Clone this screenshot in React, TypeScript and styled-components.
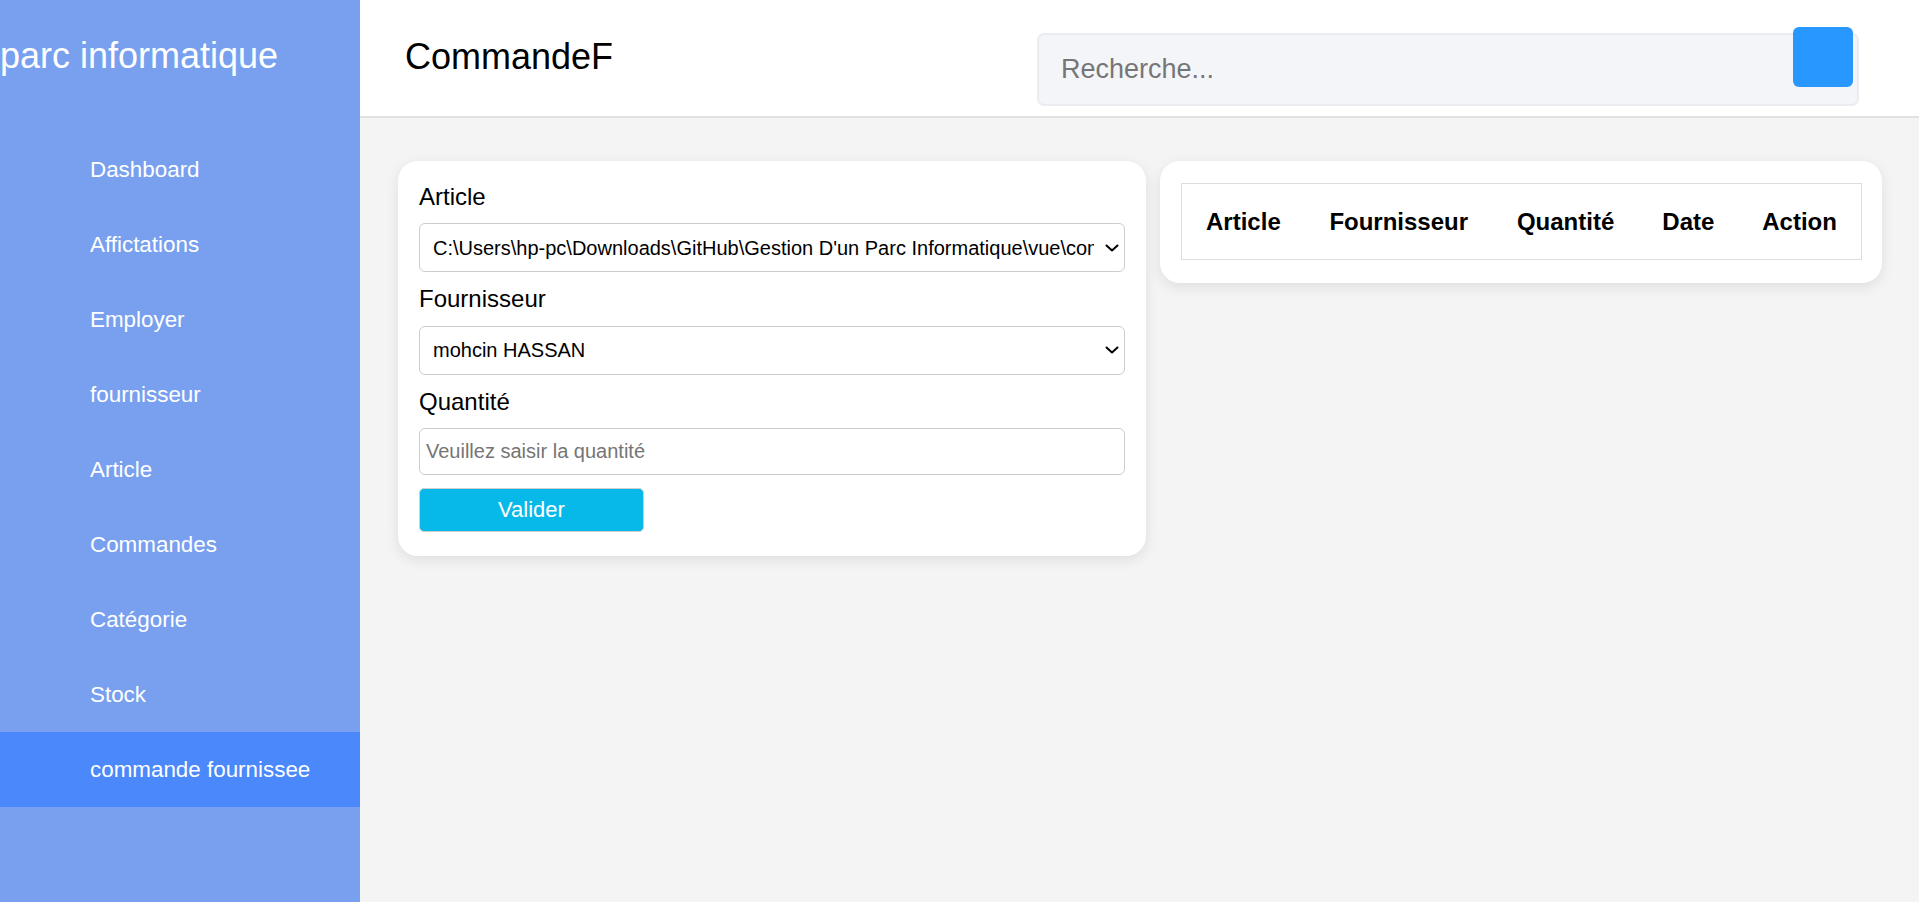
import React from "react";
import styled, { createGlobalStyle } from "styled-components";

const GlobalStyle = createGlobalStyle`
  * { box-sizing: border-box; }
  html, body { margin: 0; padding: 0; }
  body {
    font-family: "Liberation Sans", Arial, sans-serif;
    background: #f4f4f4;
  }
`;

const Layout = styled.div`
  display: flex;
  min-height: 902px;
`;

const Sidebar = styled.aside`
  width: 360px;
  flex-shrink: 0;
  background: #78a0ef;
  padding-top: 35px;
  display: flex;
  flex-direction: column;
`;

const Brand = styled.h1`
  margin: 0 0 56px 0;
  font-size: 36px;
  font-weight: 400;
  line-height: 41px;
  color: #ffffff;
  white-space: nowrap;
`;

const NavList = styled.nav`
  display: flex;
  flex-direction: column;
`;

const NavItem = styled.a<{ $active?: boolean }>`
  display: flex;
  align-items: center;
  height: 75px;
  padding-left: 90px;
  font-size: 22.4px;
  color: #ffffff;
  text-decoration: none;
  background: ${(p) => (p.$active ? "#4a88fb" : "transparent")};
`;

const Main = styled.main`
  flex: 1;
  display: flex;
  flex-direction: column;
  min-width: 0;
`;

const Header = styled.header`
  height: 118px;
  background: #ffffff;
  border-bottom: 2px solid #e2e2e2;
  display: flex;
  align-items: flex-start;
  justify-content: space-between;
  padding: 33px 60px 0 45px;
`;

const PageTitle = styled.h1`
  margin: 3px 0 0 0;
  font-size: 36px;
  font-weight: 400;
  line-height: 41px;
  color: #000000;
`;

const SearchWrap = styled.div`
  position: relative;
  width: 822px;
`;

const SearchInput = styled.input`
  width: 100%;
  height: 73px;
  border: 2px solid #ebecf0;
  border-radius: 7px;
  background: #f4f5f9;
  padding: 0 22px;
  font-family: "Liberation Sans", Arial, sans-serif;
  font-size: 27px;
  color: #333;
  outline: none;
  &::placeholder { color: #767676; }
`;

const SearchButton = styled.button`
  position: absolute;
  top: -6px;
  right: 6px;
  width: 60px;
  height: 60px;
  border: none;
  border-radius: 6px;
  background: #2897ff;
  cursor: pointer;
`;

const Content = styled.div`
  display: grid;
  grid-template-columns: 748px 722px;
  gap: 14px;
  align-items: start;
  padding: 43px 37px 0 38px;
`;

const Card = styled.section`
  background: #ffffff;
  border-radius: 20px;
  box-shadow: 0 4px 14px rgba(0, 0, 0, 0.09);
`;

const FormCard = styled(Card)`
  padding: 22px 21px 24px 21px;
  display: flex;
  flex-direction: column;
  gap: 13.2px;
`;

const Label = styled.label`
  font-size: 24px;
  line-height: 27px;
  color: #000;
`;

const SelectWrap = styled.div`
  position: relative;
  width: 100%;
`;

const Select = styled.select`
  width: 100%;
  height: 49px;
  border: 1px solid #cccccc;
  border-radius: 6px;
  background: #ffffff;
  padding: 0 30px 0 13px;
  font-family: "Liberation Sans", Arial, sans-serif;
  font-size: 20px;
  color: #000;
  outline: none;
  appearance: none;
  -webkit-appearance: none;
  text-overflow: clip;
`;

const Chevron = styled.svg`
  position: absolute;
  right: 6px;
  top: 50%;
  width: 14px;
  height: 8px;
  margin-top: -4px;
  pointer-events: none;
`;

const TextInput = styled.input`
  width: 100%;
  height: 47px;
  border: 1px solid #cccccc;
  border-radius: 6px;
  background: #ffffff;
  padding: 0 6px;
  font-family: "Liberation Sans", Arial, sans-serif;
  font-size: 20px;
  color: #000;
  outline: none;
  &::placeholder { color: #757575; }
`;

const SubmitButton = styled.button`
  width: 225px;
  height: 44px;
  border: 1px solid #cfcfcf;
  border-radius: 5px;
  background: #07b9e9;
  color: #ffffff;
  font-family: "Liberation Sans", Arial, sans-serif;
  font-size: 22px;
  cursor: pointer;
`;

const TableCard = styled(Card)`
  padding: 22px 20px 23px 21px;
`;

const Table = styled.table`
  width: 100%;
  border-collapse: collapse;
  border: 1px solid #dddddd;
`;

const Th = styled.th`
  padding: 24px 23px;
  font-size: 24px;
  font-weight: 700;
  line-height: 27px;
  color: #000;
  text-align: center;
  white-space: nowrap;
`;

const navItems = [
  "Dashboard",
  "Affictations",
  "Employer",
  "fournisseur",
  "Article",
  "Commandes",
  "Catégorie",
  "Stock",
  "commande fournissee",
];

function SelectField({ value, children }: { value: string; children: React.ReactNode }) {
  return (
    <SelectWrap>
      <Select defaultValue={value}>{children}</Select>
      <Chevron viewBox="0 0 14 8" fill="none">
        <path d="M1.5 1.5 L7 6.5 L12.5 1.5" stroke="#000" strokeWidth="2" strokeLinecap="round" strokeLinejoin="round" />
      </Chevron>
    </SelectWrap>
  );
}

export default function App() {
  return (
    <>
      <GlobalStyle />
      <Layout>
        <Sidebar>
          <Brand>parc informatique</Brand>
          <NavList>
            {navItems.map((item) => (
              <NavItem key={item} $active={item === "commande fournissee"}>
                {item}
              </NavItem>
            ))}
          </NavList>
        </Sidebar>
        <Main>
          <Header>
            <PageTitle>CommandeF</PageTitle>
            <SearchWrap>
              <SearchInput placeholder="Recherche..." />
              <SearchButton aria-label="Rechercher" />
            </SearchWrap>
          </Header>
          <Content>
            <FormCard>
              <Label>Article</Label>
              <SelectField value="a">
                <option value="a">
                  C:\Users\hp-pc\Downloads\GitHub\Gestion D'un Parc Informatique\vue\components\article
                </option>
              </SelectField>
              <Label>Fournisseur</Label>
              <SelectField value="m">
                <option value="m">mohcin HASSAN</option>
              </SelectField>
              <Label>Quantité</Label>
              <TextInput placeholder="Veuillez saisir la quantité" />
              <SubmitButton>Valider</SubmitButton>
            </FormCard>
            <TableCard>
              <Table>
                <thead>
                  <tr>
                    <Th>Article</Th>
                    <Th>Fournisseur</Th>
                    <Th>Quantité</Th>
                    <Th>Date</Th>
                    <Th>Action</Th>
                  </tr>
                </thead>
              </Table>
            </TableCard>
          </Content>
        </Main>
      </Layout>
    </>
  );
}
